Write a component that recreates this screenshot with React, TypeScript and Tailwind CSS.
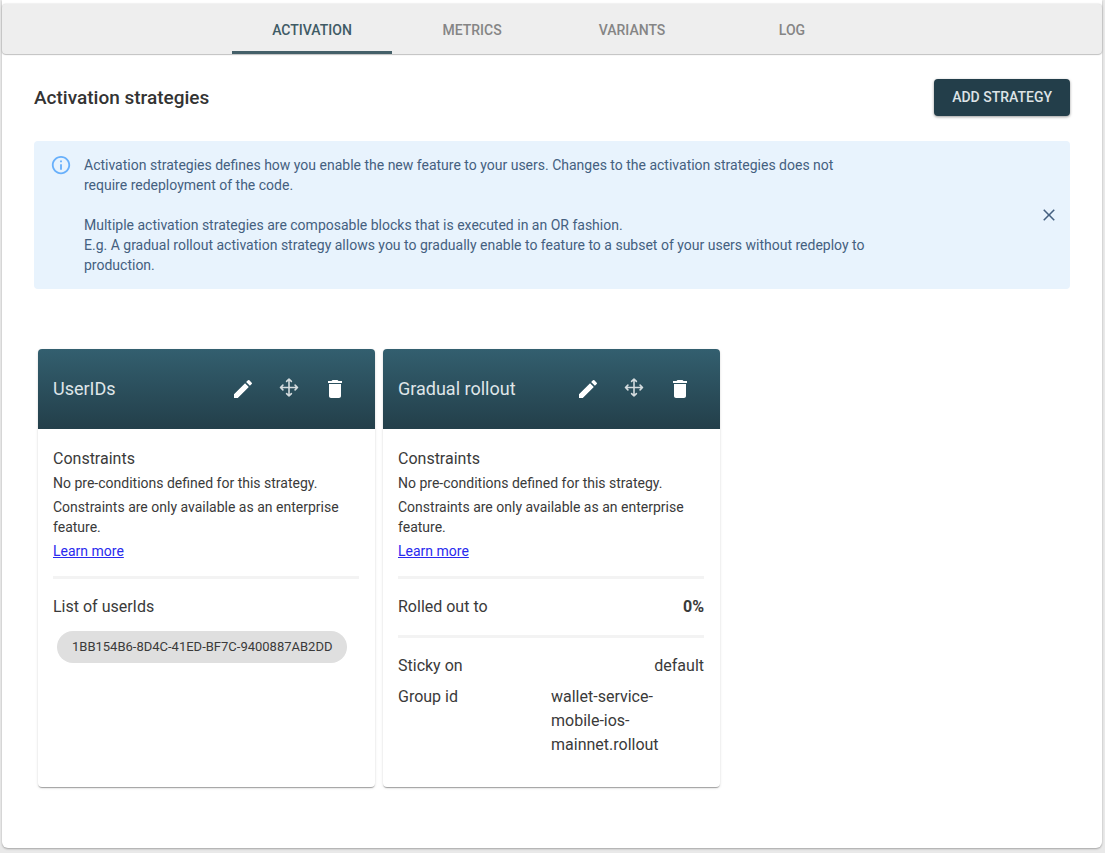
import type { ReactNode } from "react";
import { MdDelete, MdEdit } from "react-icons/md";

const tabs = ["Activation", "Metrics", "Variants", "Log"];

function InfoIcon() {
  return (
    <svg viewBox="0 0 24 24" className="size-[22px] shrink-0 fill-[#68b0fb]" aria-hidden="true">
      <path d="M11 6h2v2h-2zm0 4h2v6h-2zm1-9C6.48 1 2 5.48 2 11s4.48 10 10 10 10-4.48 10-10S17.52 1 12 1zm0 18c-4.41 0-8-3.59-8-8s3.59-8 8-8 8 3.59 8 8-3.59 8-8 8z" />
    </svg>
  );
}

function CloseIcon() {
  return (
    <svg viewBox="0 0 20 20" className="size-5 fill-current" aria-hidden="true">
      <path d="M15.8 5.3 14.7 4.2 10 8.9 5.3 4.2 4.2 5.3 8.9 10 4.2 14.7 5.3 15.8 10 11.1 14.7 15.8 15.8 14.7 11.1 10z" />
    </svg>
  );
}

function MoveIcon() {
  return (
    <svg
      viewBox="0 0 24 24"
      className="size-6 fill-none stroke-white/80 stroke-[1.6]"
      strokeLinecap="round"
      strokeLinejoin="round"
      aria-hidden="true"
    >
      <path d="M12 2v17M3.5 10.5h17M9.6 4.4 12 2l2.4 2.4M9.6 16.6 12 19l2.4-2.4M5.9 8.1l-2.4 2.4 2.4 2.4M18.1 8.1l2.4 2.4-2.4 2.4" />
    </svg>
  );
}

function IconButton({ label, children }: { label: string; children: ReactNode }) {
  return (
    <button type="button" aria-label={label} className="flex size-[46px] items-center justify-center text-white">
      {children}
    </button>
  );
}

function Divider() {
  return <hr className="border-t-[3px] border-[#f3f3f3]" />;
}

function StrategyCard({ name, children }: { name: string; children: ReactNode }) {
  return (
    <article className="w-full max-w-[337px] overflow-hidden rounded bg-white shadow-[0_2px_1px_-1px_rgba(0,0,0,0.2),0_1px_1px_0_rgba(0,0,0,0.14),0_1px_3px_0_rgba(0,0,0,0.12)]">
      <header className="flex h-20 items-center justify-between bg-linear-to-b from-[#335f6f] to-[#233f4a] pr-[17px] pl-[15px]">
        <h3 className="text-lg leading-6 text-[#dfe5e8]">{name}</h3>
        <div className="flex">
          <IconButton label={`Edit ${name}`}>
            <MdEdit className="size-6" />
          </IconButton>
          <IconButton label={`Move ${name}`}>
            <MoveIcon />
          </IconButton>
          <IconButton label={`Delete ${name}`}>
            <MdDelete className="size-6" />
          </IconButton>
        </div>
      </header>
      <div className="pt-[18px] pr-4 pb-[30px] pl-[15px] text-[#3a3a3a]">
        <h4 className="text-base leading-6">Constraints</h4>
        <div className="flex flex-col gap-1 pt-[2px] pb-[15px] text-sm leading-5">
          <p>No pre-conditions defined for this strategy.</p>
          <p>Constraints are only available as an enterprise feature.</p>
          <a href="#enterprise" className="self-start text-[#2a2aee] underline">
            Learn more
          </a>
        </div>
        <Divider />
        {children}
      </div>
    </article>
  );
}

export default function App() {
  return (
    <div className="min-h-screen bg-[#e9e9e9] pr-[3px] pb-[5px] pl-[2px] font-['Roboto',sans-serif]">
      <main className="flex min-h-[calc(100vh-5px)] flex-col rounded-b-md bg-white pt-1 shadow-[0_1px_2px_rgba(0,0,0,0.3)]">
        <nav
          role="tablist"
          aria-label="Feature sections"
          className="flex justify-center rounded bg-[#eeeeee] shadow-[0_0_2px_rgba(0,0,0,0.2),0_1px_1px_rgba(0,0,0,0.2)]"
        >
          {tabs.map((tab, i) => (
            <button
              key={tab}
              type="button"
              role="tab"
              aria-selected={i === 0}
              className={
                i === 0
                  ? "h-[50px] w-40 border-b-[3px] border-[#446069] pt-[5px] text-sm font-medium text-[#3f5b65] uppercase"
                  : "h-[50px] w-40 border-b-[3px] border-transparent pt-[5px] text-sm font-medium text-[#858585] uppercase"
              }
            >
              {tab}
            </button>
          ))}
        </nav>

        <section className="flex flex-col px-8 pt-[25px]">
          <div className="flex items-center justify-between">
            <h2 className="text-[19px] leading-7 font-medium text-[#333333]">Activation strategies</h2>
            <button
              type="button"
              className="rounded bg-[#233e4a] px-[18px] py-2 text-sm leading-[21px] font-medium text-[#dde3e6] uppercase shadow-[0_1px_3px_rgba(0,0,0,0.4)]"
            >
              Add strategy
            </button>
          </div>

          <div role="note" className="mt-[25px] flex items-center rounded bg-[#e8f3fd] py-[14px] pr-[11px] pl-4 text-[#446080]">
            <div className="flex grow gap-3">
              <InfoIcon />
              <p className="max-w-[788px] text-sm leading-5">
                Activation strategies defines how you enable the new feature to your users. Changes to the activation
                strategies does not require redeployment of the code.
                <br />
                <br />
                Multiple activation strategies are composable blocks that is executed in an OR fashion.
                <br />
                E.g. A gradual rollout activation strategy allows you to gradually enable to feature to a subset of your
                users without redeploy to production.
              </p>
            </div>
            <button type="button" aria-label="Close">
              <CloseIcon />
            </button>
          </div>

          <div className="flex gap-2 px-1 pt-[60px] pb-[60px]">
            <StrategyCard name="UserIDs">
              <h4 className="pt-4 text-base leading-6">List of userIds</h4>
              <span className="mx-1 mt-3 inline-flex h-8 items-center rounded-full bg-[#dfdfdf] px-[15px] text-[13px]">
                1BB154B6-8D4C-41ED-BF7C-9400887AB2DD
              </span>
            </StrategyCard>
            <StrategyCard name="Gradual rollout">
              <dl className="text-base leading-6">
                <div className="flex justify-between pt-4 pb-4">
                  <dt>Rolled out to</dt>
                  <dd className="font-bold">0%</dd>
                </div>
              </dl>
              <Divider />
              <dl className="flex flex-col gap-[7px] pt-4 text-base leading-6">
                <div className="flex justify-between">
                  <dt>Sticky on</dt>
                  <dd>default</dd>
                </div>
                <div className="flex justify-between">
                  <dt>Group id</dt>
                  <dd className="w-1/2">wallet-service-mobile-ios-mainnet.rollout</dd>
                </div>
              </dl>
            </StrategyCard>
          </div>
        </section>
      </main>
    </div>
  );
}
